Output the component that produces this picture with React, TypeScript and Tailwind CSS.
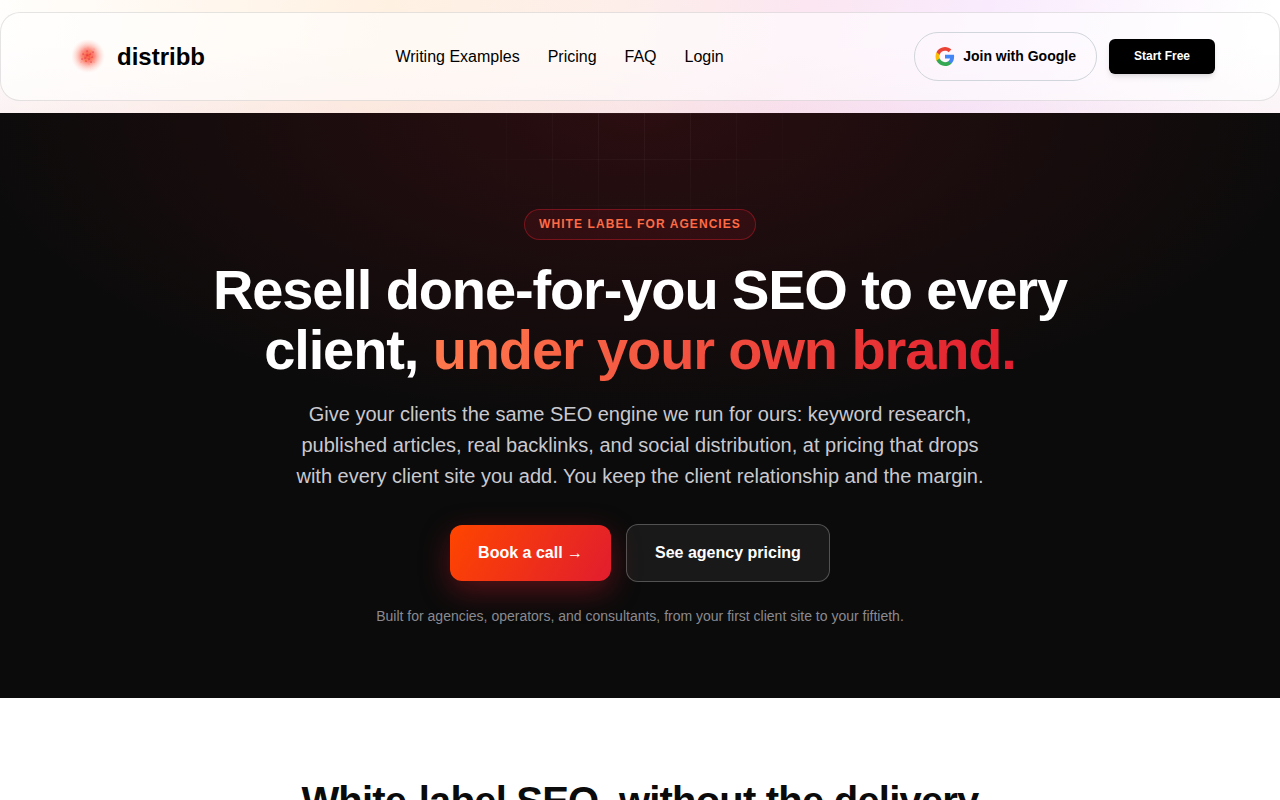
const navLinks = [
  { label: 'Writing Examples', href: '#examples' },
  { label: 'Pricing', href: '#pricing' },
  { label: 'FAQ', href: '#faq' },
  { label: 'Login', href: '#login' },
];

function LogoMark() {
  return (
    <svg viewBox="0 0 48 48" className="h-12 w-12" aria-hidden="true">
      <defs>
        <radialGradient id="logo-glow">
          <stop offset="0" stopColor="#f4402f" stopOpacity="0.95" />
          <stop offset="0.35" stopColor="#fa5a4a" stopOpacity="0.75" />
          <stop offset="0.7" stopColor="#fc8474" stopOpacity="0.3" />
          <stop offset="1" stopColor="#ffb4a8" stopOpacity="0" />
        </radialGradient>
      </defs>
      <circle cx="23" cy="23" r="17" fill="url(#logo-glow)" />
      {/* Speckled core */}
      <g fill="none" strokeWidth="1.2" strokeLinecap="round">
        <path stroke="#d61f1f" d="M22 22h.1M25 21h.1M20 25h.1M24 26h.1M18 21h.1M27 24h.1M22 18h.1M21 28h.1M28 19h.1M17 26h.1M26 29h.1" />
        <path stroke="#ffa04a" d="M23 24h.1M20 20h.1M26 23h.1M22 27h.1M25 18h.1M18 24h.1M28 26h.1M24 20h.1M19 28h.1" />
        <path stroke="#ff8d7c" d="M16 22h.1M30 23h.1M23 15h.1M24 31h.1M17 18h.1M29 29h.1M20 16h.1M16 29h.1M29 16h.1" />
      </g>
    </svg>
  );
}

function GoogleIcon() {
  return (
    <svg viewBox="1 1 22 22" className="h-[19px] w-5" aria-hidden="true">
      <path
        fill="#4285F4"
        d="M22.56 12.25c0-.78-.07-1.53-.2-2.25H12v4.26h5.92c-.26 1.37-1.04 2.53-2.21 3.31v2.77h3.57c2.08-1.92 3.28-4.74 3.28-8.09z"
      />
      <path
        fill="#34A853"
        d="M12 23c2.97 0 5.46-.98 7.28-2.66l-3.57-2.77c-.98.66-2.23 1.06-3.71 1.06-2.86 0-5.29-1.93-6.16-4.53H2.18v2.84C3.99 20.53 7.7 23 12 23z"
      />
      <path
        fill="#FBBC05"
        d="M5.84 14.09c-.22-.66-.35-1.36-.35-2.09s.13-1.43.35-2.09V7.07H2.18C1.43 8.55 1 10.22 1 12s.43 3.45 1.18 4.93l3.66-2.84z"
      />
      <path
        fill="#EA4335"
        d="M12 5.38c1.62 0 3.06.56 4.21 1.64l3.15-3.15C17.45 2.09 14.97 1 12 1 7.7 1 3.99 3.47 2.18 7.07l3.66 2.84c.87-2.6 3.3-4.53 6.16-4.53z"
      />
    </svg>
  );
}

function Header() {
  return (
    <header className="bg-white bg-[linear-gradient(to_bottom,transparent_40%,rgba(235,190,210,0.18)),linear-gradient(100deg,#fffefc_0%,#fff1e2_30%,#fdeeea_48%,#fbe6f1_62%,#f9ebfd_76%,#ffffff_98%)] py-3">
      <div className="flex items-center justify-between rounded-[20px] border border-black/10 bg-white/60 px-16 py-[19px]">
        <a href="#home" className="flex items-center gap-1 text-2xl font-bold text-black">
          <LogoMark />
          distribb
        </a>
        <nav className="flex items-center gap-7">
          {navLinks.map((link) => (
            <a key={link.label} href={link.href} className="text-base text-black">
              {link.label}
            </a>
          ))}
        </nav>
        <div className="flex items-center gap-3">
          <button
            type="button"
            className="flex items-center gap-2 rounded-3xl border border-gray-300 px-5 py-[14px] text-sm leading-[19px] font-semibold text-black"
          >
            <GoogleIcon />
            Join with Google
          </button>
          <button
            type="button"
            className="rounded-md bg-black px-[25px] py-[9px] text-xs leading-[17px] font-bold text-white shadow-md"
          >
            Start Free
          </button>
        </div>
      </div>
    </header>
  );
}

function Hero() {
  return (
    <section className="relative bg-[#0b0b0b] bg-[radial-gradient(ellipse_54%_54%_at_50%_0%,rgba(225,29,46,0.15),transparent)] px-6 pt-24 pb-[72px]">
      {/* Faint grid that fades out from the top centre */}
      <div className="pointer-events-none absolute inset-0 bg-[linear-gradient(rgba(255,255,255,0.04)_1px,transparent_1px),linear-gradient(90deg,rgba(255,255,255,0.04)_1px,transparent_1px)] mask-[radial-gradient(ellipse_200px_150px_at_50%_0%,black_20%,transparent)] bg-size-[46px_46px]" />
      <div className="relative mx-auto flex max-w-[920px] flex-col items-center text-center">
        <span className="rounded-full border border-[#e11d2e]/40 bg-[#e11d2e]/10 px-[14px] py-[6px] text-xs leading-[17px] font-bold tracking-[0.09em] text-[#ff6b45] uppercase">
          White label for agencies
        </span>
        <h1 className="mt-5 text-[56px] leading-[60px] font-bold tracking-[-0.02em] text-white">
          Resell done-for-you SEO to every client,{' '}
          <span className="bg-linear-[100deg] from-[#ff7a4d] to-[#e11d2e] bg-clip-text text-transparent">
            under your own brand.
          </span>
        </h1>
        <p className="mt-[19px] max-w-[700px] text-xl leading-[31px] text-[#c9c9cf]">
          Give your clients the same SEO engine we run for ours: keyword research, published articles, real backlinks,
          and social distribution, at pricing that drops with every client site you add. You keep the client
          relationship and the margin.
        </p>
        <div className="mt-8 flex items-center gap-[15px]">
          <a
            href="#book"
            className="rounded-xl bg-linear-[120deg] from-[#ff4500] to-[#e11d2e] px-7 py-4 text-base font-bold text-white shadow-[0_10px_30px_rgba(225,29,46,0.35)]"
          >
            Book a call →
          </a>
          <a
            href="#pricing"
            className="rounded-xl border border-white/25 bg-white/6 px-7 py-4 text-base font-bold text-white"
          >
            See agency pricing
          </a>
        </div>
        <p className="mt-6 text-sm leading-5 text-[#8a8a90]">
          Built for agencies, operators, and consultants, from your first client site to your fiftieth.
        </p>
      </div>
    </section>
  );
}

export default function App() {
  return (
    <div className="min-h-screen bg-white font-['Liberation_Sans',Arial,sans-serif]">
      <Header />
      <main>
        <Hero />
        <section className="bg-white px-6 py-20">
          <h2 className="mx-auto max-w-[760px] text-center text-[40px] leading-[46px] font-bold tracking-[-0.02em] text-[#0b0b0b]">
            White-label SEO, without the delivery
          </h2>
        </section>
      </main>
    </div>
  );
}
